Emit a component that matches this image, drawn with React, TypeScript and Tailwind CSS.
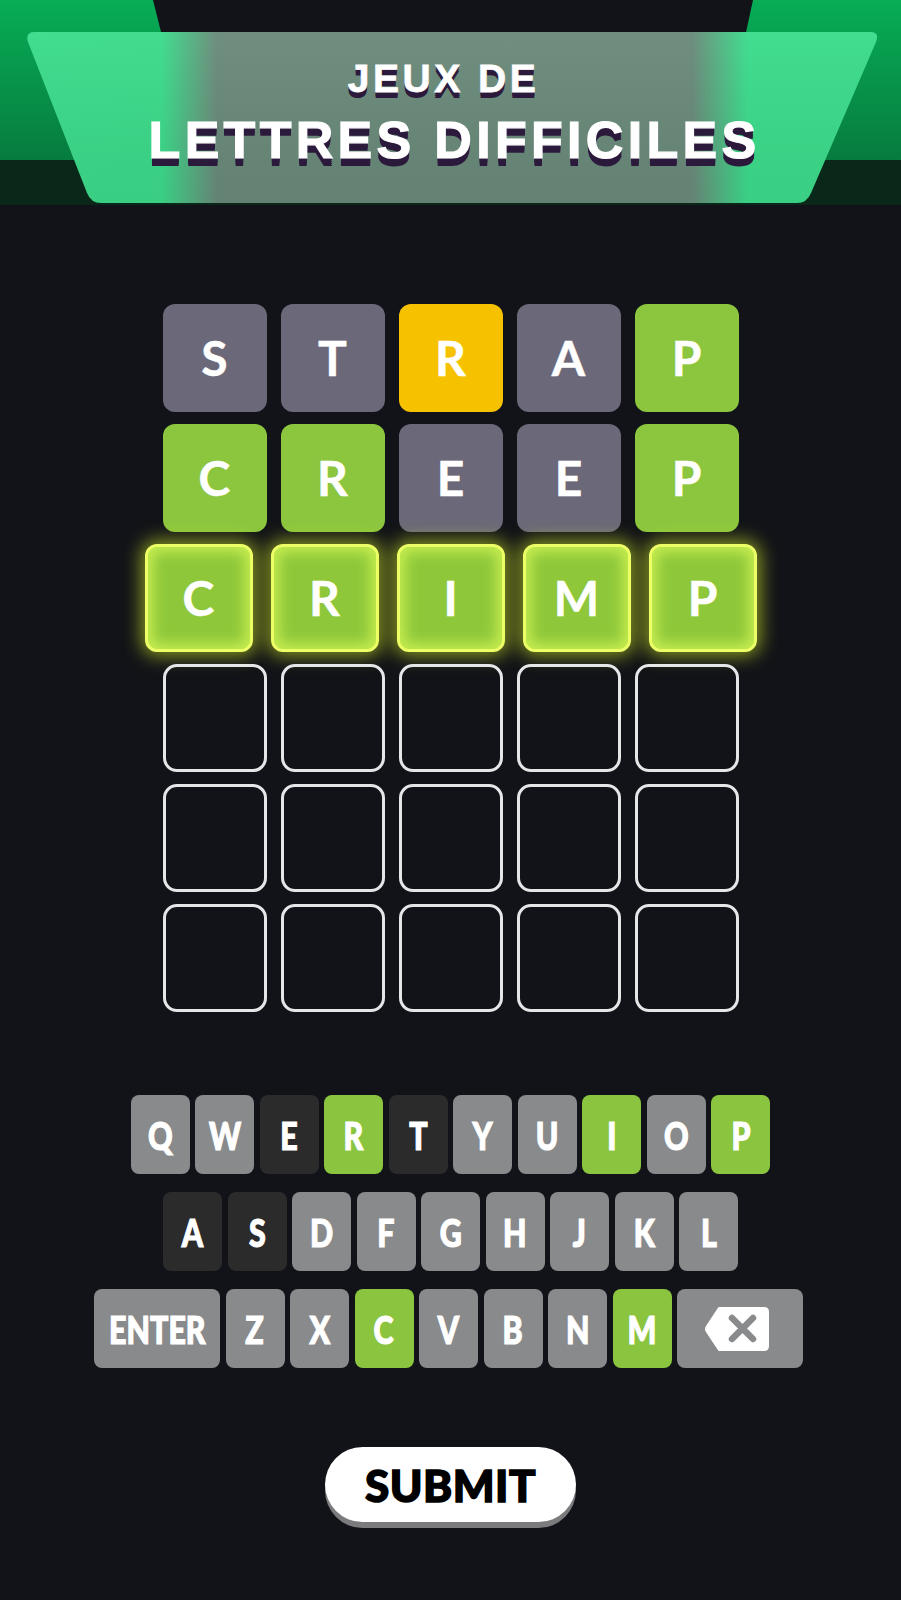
import React from "react";

type TileState = "gray" | "yellow" | "green";

const tileBg: Record<TileState, string> = {
  gray: "bg-[#6b6879]",
  yellow: "bg-[#f6c200]",
  green: "bg-[#8cc63f]",
};

function Tile({ letter, state }: { letter: string; state: TileState }) {
  return (
    <div
      className={`w-[104px] h-[108px] rounded-[12px] flex items-center justify-center text-white text-[48px] font-bold leading-none [-webkit-text-stroke:0.5px_#fff] ${tileBg[state]}`}
      style={{ fontFamily: "Lato, 'Noto Sans', sans-serif" }}
    >
      {letter}
    </div>
  );
}

function GlowTile({ letter }: { letter: string }) {
  return (
    <div
      className="w-[108px] h-[108px] rounded-[12px] flex items-center justify-center text-white text-[48px] font-bold leading-none [-webkit-text-stroke:0.5px_#fff] bg-[#8ec83a] border-[3px] border-[#ecff66] shadow-[0_0_18px_4px_rgba(214,236,40,0.6),inset_0_0_14px_5px_rgba(225,255,90,0.7)]"
      style={{ fontFamily: "Lato, 'Noto Sans', sans-serif" }}
    >
      {letter}
    </div>
  );
}

function EmptyTile() {
  return <div className="w-[104px] h-[108px] rounded-[14px] border-[3px] border-[#e6e6e8]" />;
}

type KeyState = "light" | "dark" | "green";
const keyBg: Record<KeyState, string> = {
  light: "bg-[#898a8c]",
  dark: "bg-[#2b2b2c]",
  green: "bg-[#8bc53f]",
};

function Key({ label, state, wide }: { label: React.ReactNode; state: KeyState; wide?: boolean }) {
  return (
    <div
      className={`${wide ? "w-[126px]" : "w-[59px]"} h-[79px] rounded-[8px] flex items-center justify-center text-white ${keyBg[state]}`}
    >
      {label}
    </div>
  );
}

function KeyText({ children }: { children: React.ReactNode }) {
  return (
    <span
      className="inline-block scale-x-80 text-[38px] font-black leading-none [-webkit-text-stroke:1.2px_#fff]"
      style={{ fontFamily: "Lato, 'Noto Sans', sans-serif" }}
    >
      {children}
    </span>
  );
}

function BackspaceIcon() {
  return (
    <svg width="66" height="48" viewBox="0 0 66 48" className="mr-[6px]">
      <path
        d="M15 3 H60 Q64 3 64 7 V41 Q64 45 60 45 H15 L2.5 26 Q1.5 24 2.5 22 Z"
        fill="#ffffff"
        stroke="#ffffff"
        strokeWidth="2"
        strokeLinejoin="round"
      />
      <path d="M28 13 L49 34 M49 13 L28 34" stroke="#898a8c" strokeWidth="6.5" strokeLinecap="round" />
    </svg>
  );
}

const row1: [string, KeyState][] = [
  ["Q", "light"], ["W", "light"], ["E", "dark"], ["R", "green"], ["T", "dark"],
  ["Y", "light"], ["U", "light"], ["I", "green"], ["O", "light"], ["P", "green"],
];
const row2: [string, KeyState][] = [
  ["A", "dark"], ["S", "dark"], ["D", "light"], ["F", "light"], ["G", "light"],
  ["H", "light"], ["J", "light"], ["K", "light"], ["L", "light"],
];
const row3: [string, KeyState][] = [
  ["Z", "light"], ["X", "light"], ["C", "green"], ["V", "light"], ["B", "light"], ["N", "light"], ["M", "green"],
];

const titleFont = { fontFamily: "'Liberation Sans', Arial, sans-serif" };

export default function App() {
  return (
    <div className="w-[901px] h-[1600px] bg-[#111318] flex flex-col items-center overflow-hidden">
      {/* Header */}
      <div className="relative w-full h-[205px] shrink-0">
        <div className="absolute inset-x-0 top-0 h-[160px] bg-gradient-to-b from-[#08ad56] to-[#067c3e]" />
        <div className="absolute inset-x-0 top-[160px] h-[45px] bg-[#0a2819]" />
        <div className="absolute inset-x-0 top-0 h-[60px] bg-[#111318] [clip-path:polygon(153px_0,753px_0,740px_60px,168px_60px)]" />
        <div className="absolute left-[25px] top-[32px] w-[855px] h-[171px] bg-[linear-gradient(90deg,#3ddc8c_0%,#3ddb8b_16%,#6b8b7b_22.5%,#6b8b7b_78%,#3ddc8c_84.5%,#3ddc8c_100%)] [clip-path:path('M10,0_L845,0_Q855,0_851,10_L786,161_Q782,171_772,171_L76,171_Q66,171_62,161_L3,10_Q0,0_10,0_Z')]">
          <div className="w-full h-full bg-gradient-to-b from-[rgba(255,255,255,0.03)] to-[rgba(0,0,0,0.06)]" />
        </div>
        <div className="relative flex flex-col items-center pt-[59px]" style={titleFont}>
          <div className="text-white text-[39px] font-bold leading-none tracking-[3.5px] pr-[14px] [-webkit-text-stroke:0.8px_#fff] [text-shadow:0_2px_0_#2c1a3d,0_4px_0_#2c1a3d,0_6px_0_#2c1a3d]">
            JEUX DE
          </div>
          <div className="mt-[16px] text-white text-[52px] font-bold leading-none tracking-[4.3px] ml-[8px] [-webkit-text-stroke:1.2px_#fff] [text-shadow:0_2px_0_#2c1a3d,0_4px_0_#2c1a3d,0_6px_0_#2c1a3d,0_8px_0_#2c1a3d]">
            LETTRES DIFFICILES
          </div>
        </div>
      </div>

      {/* Grid */}
      <div className="mt-[99px] flex flex-col items-center gap-[12px]">
        <div className="flex gap-[14px]">
          <Tile letter="S" state="gray" />
          <Tile letter="T" state="gray" />
          <Tile letter="R" state="yellow" />
          <Tile letter="A" state="gray" />
          <Tile letter="P" state="green" />
        </div>
        <div className="flex gap-[14px]">
          <Tile letter="C" state="green" />
          <Tile letter="R" state="green" />
          <Tile letter="E" state="gray" />
          <Tile letter="E" state="gray" />
          <Tile letter="P" state="green" />
        </div>
        <div className="flex gap-[18px]">
          {"CRIMP".split("").map((l, i) => (
            <GlowTile key={i} letter={l} />
          ))}
        </div>
        {[0, 1, 2].map((r) => (
          <div key={r} className="flex gap-[14px]">
            {[0, 1, 2, 3, 4].map((c) => (
              <EmptyTile key={c} />
            ))}
          </div>
        ))}
      </div>

      {/* Keyboard */}
      <div className="mt-[83px] flex flex-col items-center gap-[18px]">
        <div className="flex gap-[5.5px]">
          {row1.map(([l, s]) => (
            <Key key={l} label={<KeyText>{l}</KeyText>} state={s} />
          ))}
        </div>
        <div className="flex gap-[5.5px]">
          {row2.map(([l, s]) => (
            <Key key={l} label={<KeyText>{l}</KeyText>} state={s} />
          ))}
        </div>
        <div className="flex gap-[5.5px] mr-[4px]">
          <Key wide label={<KeyText>ENTER</KeyText>} state="light" />
          {row3.map(([l, s]) => (
            <Key key={l} label={<KeyText>{l}</KeyText>} state={s} />
          ))}
          <Key wide label={<BackspaceIcon />} state="light" />
        </div>
      </div>

      {/* Submit */}
      <div className="mt-[79px] w-[251px] h-[75px] rounded-full bg-white shadow-[0_6px_0_#7b7b7d] flex items-center justify-center">
        <span
          className="text-black text-[44px] font-black leading-none tracking-[0.5px] [-webkit-text-stroke:1.5px_#000]"
          style={{ fontFamily: "Lato, 'Noto Sans', sans-serif" }}
        >
          SUBMIT
        </span>
      </div>
    </div>
  );
}
